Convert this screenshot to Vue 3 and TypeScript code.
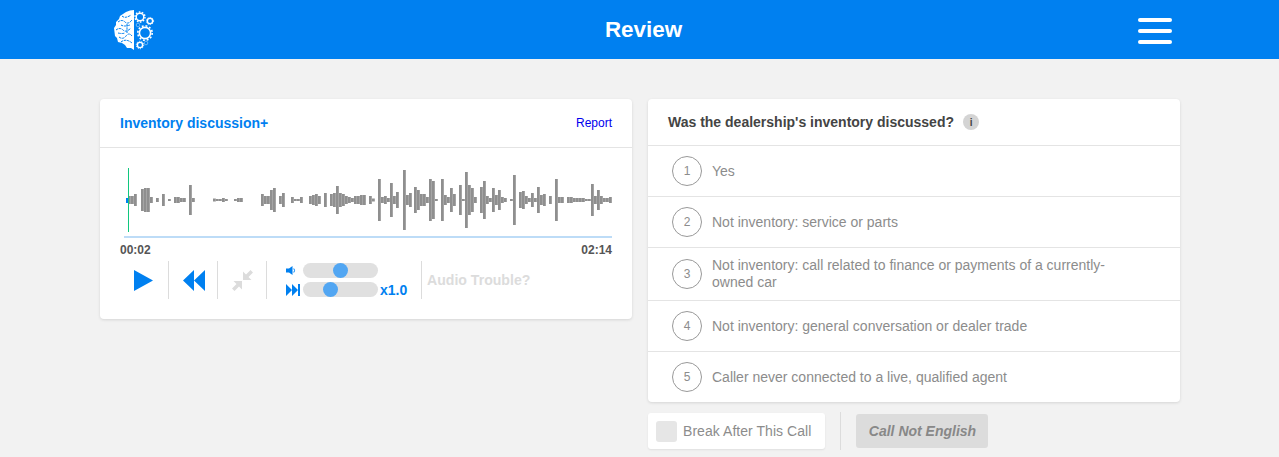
<script setup lang="ts">
const options = [
  'Yes',
  'Not inventory: service or parts',
  'Not inventory: call related to finance or payments of a currently-owned car',
  'Not inventory: general conversation or dealer trade',
  'Caller never connected to a live, qualified agent',
]

// [x, height] of each waveform bar, in page pixels
const peaks: [number, number][] = [
  [128, 8], [131, 8], [134, 12], [141, 22], [144, 24], [147, 24], [150, 6], [156, 4], [162, 12], [168, 2],
  [174, 6], [177, 6], [180, 4], [183, 4], [189, 30], [192, 4], [213, 3], [216, 2], [219, 2], [222, 4],
  [225, 2], [234, 2], [237, 4], [240, 4], [261, 12], [264, 8], [267, 8], [270, 20], [273, 24], [279, 8],
  [282, 14], [291, 6], [294, 2], [297, 2], [300, 6], [309, 8], [312, 10], [315, 12], [318, 8], [324, 14],
  [330, 12], [333, 14], [336, 28], [339, 14], [342, 12], [345, 8], [348, 6], [351, 4], [354, 8], [357, 8],
  [360, 10], [363, 10], [369, 8], [372, 3], [378, 42], [381, 6], [384, 8], [387, 4], [390, 34], [393, 8],
  [396, 16], [403, 60], [406, 10], [409, 14], [414, 26], [417, 20], [420, 12], [423, 12], [426, 6], [429, 42],
  [432, 38], [435, 2], [441, 42], [444, 10], [447, 6], [450, 24], [453, 12], [459, 30], [462, 2], [465, 56],
  [468, 30], [471, 24], [474, 6], [480, 26], [483, 38], [486, 8], [489, 4], [492, 24], [495, 10], [498, 20],
  [501, 6], [504, 4], [510, 2], [513, 50], [519, 16], [522, 18], [525, 8], [528, 4], [531, 14], [534, 4],
  [537, 26], [540, 10], [543, 12], [549, 8], [555, 42], [558, 6], [561, 6], [567, 6], [570, 6], [573, 4],
  [576, 4], [579, 4], [582, 4], [585, 2], [588, 2], [591, 32], [594, 8], [597, 20], [600, 8], [603, 4],
  [606, 4], [609, 6],
]
</script>

<template>
  <div class="page">
    <header class="topbar">
      <svg class="logo" width="42" height="42" viewBox="0 0 42 42">
        <path
          d="M21 1 L17 1.5 L13 3 L10 5 L7 7 L6 10 L3 13 L3 16 L1 19 L1.5 23 L2 27 L4 29 L5 33 L9 34 L12 36 L14 39 L18 39 L21 41 Z"
          fill="#fff"
        />
        <g fill="none" stroke="#0080f0" stroke-width="1" stroke-dasharray="2.5 0.8">
          <path d="M5 13 Q9 10 12 13 T19 11" />
          <path d="M3 21 Q7 18 10 21 T18 19" />
          <path d="M6 28 Q10 31 13 27 T19 27" />
          <path d="M9 7 Q12 10 18 6" />
          <path d="M8 33 Q13 29 19 34" />
          <path d="M14 15 V24" />
          <path d="M8 16 Q11 18 17 16" />
          <path d="M5 24 Q9 25 12 24" />
        </g>
        <g fill="none" stroke="#fff">
          <circle cx="27" cy="8" r="3.8" stroke-width="1.5" />
          <circle cx="27" cy="8" r="5" stroke-width="1.4" stroke-dasharray="1.6 1.5" />
          <circle cx="37" cy="12" r="2.6" stroke-width="1.3" />
          <circle cx="37" cy="12" r="3.6" stroke-width="1" stroke-dasharray="1.2 1.1" />
          <circle cx="32" cy="24" r="5.6" stroke-width="1.6" />
          <circle cx="32" cy="24" r="7.2" stroke-width="1.6" stroke-dasharray="1.9 1.9" />
          <circle cx="27" cy="36" r="2.6" stroke-width="1.4" />
          <circle cx="27" cy="36" r="3.7" stroke-width="1" stroke-dasharray="1.2 1.1" />
          <circle cx="25" cy="16" r="1.8" stroke-width="0.8" opacity="0.5" />
          <circle cx="33" cy="34" r="1.8" stroke-width="0.8" opacity="0.5" />
        </g>
      </svg>
      <h1 class="title">Review</h1>
      <div class="burger">
        <span></span>
        <span></span>
        <span></span>
      </div>
    </header>

    <main class="columns">
      <section class="card player">
        <div class="player-head">
          <span class="player-name">Inventory discussion+</span>
          <a class="report">Report</a>
        </div>

        <div class="player-body">
          <svg class="wave" width="488" height="66" viewBox="126 167 488 66">
            <rect x="126" y="198" width="2" height="5" fill="#0080f0" />
            <rect
              v-for="[x, h] in peaks"
              :key="x"
              :x="x"
              :y="200 - h / 2"
              width="2.8"
              :height="h"
              fill="#8f8f8f"
            />
            <rect x="128" y="168" width="1" height="64" fill="#10c77f" />
          </svg>
          <div class="timeline"></div>
          <div class="times">
            <span>00:02</span>
            <span>02:14</span>
          </div>

          <div class="controls">
            <button class="ctl">
              <svg width="19" height="21" viewBox="0 0 19 21"><path d="M0 0 L19 10.5 L0 21 Z" fill="#0080f0" /></svg>
            </button>
            <button class="ctl">
              <svg width="22" height="21" viewBox="0 0 22 21">
                <path d="M11 0 V21 L0 10.5 Z M22 0 V21 L11 10.5 Z" fill="#0080f0" />
              </svg>
            </button>
            <button class="ctl">
              <svg width="21" height="21" viewBox="0 0 21 21" fill="#dcdcdc">
                <path d="M11 1.5 V10 H19.5 L16.5 7 L21 2.5 L18.5 0 L14 4.5 Z" />
                <path d="M10 19.5 V11 H1.5 L4.5 14 L0 18.5 L2.5 21 L7 16.5 Z" />
              </svg>
            </button>

            <div class="sliders">
              <div class="slider-row">
                <svg class="slider-icon" width="14" height="9" viewBox="0 0 14 9">
                  <path d="M0 2.5 H3 L6.5 0 V9 L3 6.5 H0 Z" fill="#0080f0" />
                  <path d="M7.8 2.5 Q9.3 4.5 7.8 6.5" fill="none" stroke="#0080f0" />
                </svg>
                <div class="track"><span class="thumb vol"></span></div>
              </div>
              <div class="slider-row">
                <svg class="slider-icon" width="14" height="12" viewBox="0 0 14 12">
                  <path d="M0 0 L6 6 L0 12 Z M6 0 L12 6 L6 12 Z M12 0 H14 V12 H12 Z" fill="#0080f0" />
                </svg>
                <div class="track"><span class="thumb speed"></span></div>
                <span class="rate">x1.0</span>
              </div>
            </div>

            <div class="trouble">Audio Trouble?</div>
          </div>
        </div>
      </section>

      <div class="right">
        <section class="card question">
          <div class="question-head">
            <span>Was the dealership's inventory discussed?</span>
            <i class="info">i</i>
          </div>
          <div v-for="(opt, i) in options" :key="i" class="option">
            <span class="num">{{ i + 1 }}</span>
            <span class="opt-text">{{ opt }}</span>
          </div>
        </section>

        <div class="actions">
          <label class="break">
            <span class="check"></span>
            Break After This Call
          </label>
          <span class="action-sep"></span>
          <button class="not-english">Call Not English</button>
        </div>
      </div>
    </main>
  </div>
</template>

<style scoped>
.page {
  height: 457px;
  overflow: hidden;
  background: #f2f2f2;
  font-family: 'Liberation Sans', Arial, sans-serif;
}

.topbar {
  display: grid;
  grid-template-columns: 1fr auto 1fr;
  align-items: center;
  height: 59px;
  padding: 0 107px 0 113px;
  background: #0080f0;
  color: #fff;
}

.logo {
  display: block;
}

.title {
  margin: 0;
  padding-left: 2px;
  font-size: 22.4px;
  font-weight: 700;
  line-height: 59px;
}

.burger {
  justify-self: end;
  display: flex;
  flex-direction: column;
  gap: 7px;
  width: 34px;
  margin-top: 3px;
}

.burger span {
  height: 4px;
  border-radius: 2px;
  background: #fff;
}

.columns {
  display: grid;
  grid-template-columns: 532px 532px;
  gap: 16px;
  align-items: start;
  padding: 40px 0 0 100px;
}

.card {
  background: #fff;
  border-radius: 4px;
  box-shadow: 0 1px 3px rgba(0, 0, 0, 0.12);
}

.player-head {
  display: flex;
  justify-content: space-between;
  align-items: center;
  height: 48px;
  padding: 0 20px;
  border-bottom: 1px solid #e4e4e4;
}

.player-name {
  color: #0080f0;
  font-size: 14px;
  font-weight: 700;
}

.report {
  color: #0000ee;
  font-size: 12px;
}

.player-body {
  padding: 19px 20px 0 20px;
}

.wave {
  display: block;
  margin-left: 6px;
}

.timeline {
  height: 2px;
  margin: 3px 0 0 4px;
  background: #bddcf7;
}

.times {
  display: flex;
  justify-content: space-between;
  height: 14px;
  margin-top: 5px;
  color: #555;
  font-size: 12px;
  font-weight: 700;
  line-height: 14px;
}

.controls {
  display: flex;
  align-items: center;
  height: 38px;
  margin-top: 4px;
  padding-bottom: 20px;
  box-sizing: content-box;
}

.ctl {
  display: flex;
  align-items: center;
  justify-content: center;
  width: 49px;
  height: 38px;
  padding: 0 0 0 1px;
  border: none;
  border-right: 1px solid #dcdcdc;
  background: none;
}

.ctl:first-child {
  padding: 0 2px 0 0;
}

.sliders {
  display: flex;
  flex-direction: column;
  gap: 4px;
  width: 155px;
  padding-left: 19px;
  box-sizing: border-box;
  height: 38px;
  justify-content: center;
  border-right: 1px solid #dcdcdc;
}

.slider-row {
  display: flex;
  align-items: center;
  height: 15px;
}

.slider-icon {
  flex: none;
  width: 14px;
  margin-right: 3px;
}

.track {
  position: relative;
  flex: none;
  width: 75px;
  height: 15px;
  border-radius: 8px;
  background: #e0e0e0;
}

.thumb {
  position: absolute;
  top: 0;
  width: 15px;
  height: 15px;
  border-radius: 50%;
  background: #52a6f2;
}

.thumb.vol {
  left: 30px;
}

.thumb.speed {
  left: 20px;
}

.rate {
  margin-left: 2px;
  color: #0080f0;
  font-size: 14px;
  font-weight: 700;
}

.trouble {
  padding-left: 5px;
  color: #dcdcdc;
  font-size: 14.1px;
  font-weight: 700;
  white-space: nowrap;
}

.question-head {
  display: flex;
  align-items: center;
  gap: 9px;
  height: 46px;
  padding-left: 20px;
  border-bottom: 1px solid #e4e4e4;
  color: #444;
  font-size: 14px;
  font-weight: 700;
}

.info {
  display: flex;
  align-items: center;
  justify-content: center;
  width: 16px;
  height: 16px;
  border-radius: 50%;
  background: #d4d4d4;
  color: #444;
  font-size: 10px;
  font-style: normal;
  font-weight: 700;
}

.option {
  display: flex;
  align-items: center;
  gap: 10px;
  box-sizing: border-box;
  min-height: 51px;
  padding: 9px 60px 9px 24px;
  border-bottom: 1px solid #e4e4e4;
  color: #8c8c8c;
  font-size: 14px;
  line-height: 17px;
}

.option:last-child {
  min-height: 50px;
  border-bottom: none;
}

.num {
  flex: none;
  display: flex;
  align-items: center;
  justify-content: center;
  width: 28px;
  height: 28px;
  border: 1px solid #999;
  border-radius: 50%;
  font-size: 12px;
}

.actions {
  display: flex;
  align-items: center;
  margin-top: 10px;
}

.break {
  display: flex;
  align-items: center;
  gap: 6px;
  width: 177px;
  height: 36px;
  padding-left: 8px;
  box-sizing: border-box;
  border-radius: 3px;
  background: #fff;
  box-shadow: 0 1px 2px rgba(0, 0, 0, 0.08);
  color: #8c8c8c;
  font-size: 14px;
  letter-spacing: 0.05px;
}

.check {
  width: 21px;
  height: 21px;
  border-radius: 3px;
  background: #e6e6e6;
}

.action-sep {
  width: 1px;
  height: 38px;
  margin: 0 15px;
  background: #dcdcdc;
}

.not-english {
  width: 132px;
  height: 34px;
  padding: 0 0 0 1px;
  border: none;
  border-radius: 3px;
  background: #dcdcdc;
  color: #888;
  font-family: inherit;
  font-size: 14px;
  font-style: italic;
  font-weight: 700;
}
</style>
